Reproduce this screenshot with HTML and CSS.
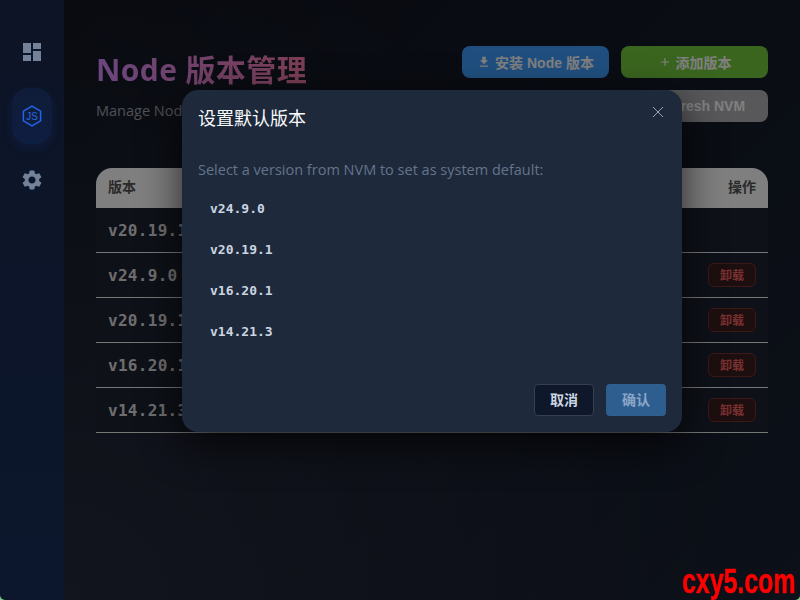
FILE: index.html
```html
<!DOCTYPE html>
<html lang="zh-CN">
<head>
<meta charset="utf-8">
<title>Node 版本管理</title>
<link rel="stylesheet" href="styles.css">
</head>
<body>
<div class="app">
  <nav class="sidebar">
    <a class="nav-item"><svg class="nav-icon" viewBox="0 0 24 24"><path d="M3 13h8V3H3v10zm0 8h8v-6H3v6zm10 0h8V11h-8v10zm0-18v6h8V3h-8z"/></svg></a>
    <a class="nav-item active"><svg class="nav-icon" viewBox="0 0 24 24"><path class="hex" d="M12 2.2l8.6 4.9v9.8L12 21.8l-8.6-4.9V7.1z"/><text class="js" x="12" y="16" textLength="11.5" lengthAdjust="spacingAndGlyphs">JS</text></svg></a>
    <a class="nav-item"><svg class="nav-icon" viewBox="0 0 24 24"><path d="M19.14 12.94c.04-.3.06-.61.06-.94 0-.32-.02-.64-.07-.94l2.03-1.58c.18-.14.23-.41.12-.61l-1.92-3.32c-.12-.22-.37-.29-.59-.22l-2.39.96c-.5-.38-1.03-.7-1.62-.94l-.36-2.54c-.04-.24-.24-.41-.48-.41h-3.84c-.24 0-.43.17-.47.41l-.36 2.54c-.59.24-1.13.57-1.62.94l-2.39-.96c-.22-.08-.47 0-.59.22L2.74 8.87c-.12.21-.08.47.12.61l2.03 1.58c-.05.3-.09.63-.09.94s.02.64.07.94l-2.03 1.58c-.18.14-.23.41-.12.61l1.92 3.32c.12.22.37.29.59.22l2.39-.96c.5.38 1.03.7 1.62.94l.36 2.54c.05.24.24.41.48.41h3.84c.24 0 .44-.17.47-.41l.36-2.54c.59-.24 1.13-.56 1.62-.94l2.39.96c.22.08.47 0 .59-.22l1.92-3.32c.12-.22.07-.47-.12-.61l-2.01-1.58zM12 15.6c-1.98 0-3.6-1.62-3.6-3.6s1.62-3.6 3.6-3.6 3.6 1.62 3.6 3.6-1.62 3.6-3.6 3.6z"/></svg></a>
  </nav>
  <main class="main">
    <header class="page-header">
      <div class="heading">
        <h1 class="title">Node 版本管理</h1>
        <p class="subtitle">Manage Node.js versions</p>
      </div>
      <div class="actions">
        <button class="btn btn-blue"><svg class="btn-icon" viewBox="0 0 24 24"><path d="M19 9h-4V3H9v6H5l7 7 7-7zM5 18v2h14v-2H5z"/></svg>安装 Node 版本</button>
        <button class="btn btn-green"><svg class="btn-icon" viewBox="0 0 24 24"><path d="M19 13h-6v6h-2v-6H5v-2h6V5h2v6h6v2z"/></svg>添加版本</button>
        <button class="btn btn-grey btn-refresh"><svg class="btn-icon" viewBox="0 0 24 24"><path d="M17.65 6.35A7.96 7.96 0 0 0 12 4a8 8 0 1 0 7.73 10h-2.08A6 6 0 1 1 12 6c1.66 0 3.14.69 4.22 1.78L13 11h7V4l-2.35 2.35z"/></svg>Refresh NVM</button>
      </div>
    </header>
    <table class="versions">
      <thead><tr><th>版本</th><th class="op">操作</th></tr></thead>
      <tbody>
        <tr><td class="ver">v20.19.1</td><td class="op"></td></tr>
        <tr><td class="ver">v24.9.0</td><td class="op"><button class="uninstall">卸载</button></td></tr>
        <tr><td class="ver">v20.19.1</td><td class="op"><button class="uninstall">卸载</button></td></tr>
        <tr><td class="ver">v16.20.1</td><td class="op"><button class="uninstall">卸载</button></td></tr>
        <tr><td class="ver">v14.21.3</td><td class="op"><button class="uninstall">卸载</button></td></tr>
      </tbody>
    </table>
    <div class="overlay">
      <section class="dialog">
        <header class="dialog-header">
          <h2 class="dialog-title">设置默认版本</h2>
          <svg class="close" viewBox="0 0 12 12"><path d="M1 1l10 10M11 1L1 11"/></svg>
        </header>
        <div class="dialog-body">
          <p class="message">Select a version from NVM to set as system default:</p>
          <ul class="options">
            <li>v24.9.0</li>
            <li>v20.19.1</li>
            <li>v16.20.1</li>
            <li>v14.21.3</li>
          </ul>
        </div>
        <footer class="dialog-footer">
          <button class="dlg-btn cancel">取消</button>
          <button class="dlg-btn confirm">确认</button>
        </footer>
      </section>
    </div>
  </main>
</div>
<div class="watermark">cxy5.com</div>
</body>
</html>
```
FILE: styles.css
```css
* { box-sizing: border-box; }
html, body { margin: 0; height: 100%; overflow: hidden; }
body {
  font-family: "Open Sans", "Noto Sans CJK SC", sans-serif;
  background: #7fcf8c;
  color: #fff;
}
.app {
  display: flex;
  height: 600px;
  overflow: hidden;
  border-radius: 0 0 5px 5px;
}
.sidebar {
  width: 64px;
  flex: none;
  padding: 24px 12px 0;
  display: flex;
  flex-direction: column;
  gap: 8px;
  background: linear-gradient(180deg, #0d1426 0%, #0c172d 100%);
}
.nav-item {
  height: 56px;
  display: flex;
  align-items: center;
  justify-content: center;
  border-radius: 16px;
}
.nav-item.active {
  background: linear-gradient(180deg, #0f1c38, #0e1e42);
  box-shadow: 0 4px 12px rgba(37, 99, 235, 0.1);
}
.nav-icon { width: 24px; height: 24px; fill: #738298; }
.active .nav-icon { fill: none; }
.hex { fill: none; stroke: #2563eb; stroke-width: 1.5; }
.js {
  fill: #2a6be8;
  font: 400 11px "Liberation Sans", sans-serif;
  text-anchor: middle;
}
.main {
  position: relative;
  flex: 1;
  min-width: 0;
  padding: 46px 32px 0;
  background:
    radial-gradient(circle at 0% 100%, #262a3c 0%, rgba(38, 42, 60, 0) 70%),
    linear-gradient(135deg, #10141f 0%, #182030 100%);
}
.page-header { display: flex; justify-content: space-between; }
.title {
  margin: 0;
  font: 700 30px/48px "Open Sans", "Noto Sans CJK SC", sans-serif;
  letter-spacing: 0.4px;
  background: linear-gradient(90deg, #d68cff, #f87ca8);
  -webkit-background-clip: text;
  background-clip: text;
  color: transparent;
}
.subtitle { margin: 7px 0 0; font-size: 14.5px; line-height: 20px; color: #a0a0a8; }
.actions { display: grid; grid-template-columns: 147px 147px; gap: 12px; }
.btn {
  height: 32px;
  display: flex;
  align-items: center;
  justify-content: center;
  gap: 4px;
  border: 0;
  border-radius: 8px;
  color: #fff;
  font: 700 14px "Liberation Sans", "Noto Sans CJK SC", sans-serif;
}
.btn-icon { width: 14px; height: 14px; fill: currentColor; }
.btn-blue { background: #409eff; }
.btn-green { background: #74ca3e; }
.btn-grey { background: #b0b0b6; }
.btn-refresh { grid-column: 2; padding-right: 10px; }
.versions {
  width: 100%;
  margin-top: 46px;
  border-collapse: separate;
  border-spacing: 0;
}
.versions th {
  height: 40px;
  padding: 0 12px 4px;
  background: #fff;
  color: #555;
  font-size: 14px;
  font-weight: 700;
  text-align: left;
}
.versions th:first-child { border-top-left-radius: 16px; }
.versions th:last-child { border-top-right-radius: 16px; }
.versions .op { text-align: right; }
.versions td {
  height: 45px;
  padding: 0 12px;
  background: #1c2230;
  border-bottom: 1px solid #eee;
}
.ver {
  font: 700 16px "DejaVu Sans Mono", monospace;
  letter-spacing: 0.3px;
  color: #dcdcdc;
}
.uninstall {
  width: 48px;
  height: 24px;
  display: inline-block;
  vertical-align: middle;
  padding: 0 0 2px;
  border: 1px solid #7c2f2f;
  border-radius: 6px;
  background: #3a1e1e;
  color: #f06060;
  font: 700 12px "Noto Sans CJK SC", sans-serif;
}
.overlay {
  position: absolute;
  inset: 0;
  display: flex;
  justify-content: center;
  align-items: flex-start;
  padding-top: 90px;
  background: rgba(0, 0, 0, 0.5);
}
.dialog {
  width: 500px;
  height: 342px;
  display: flex;
  flex-direction: column;
  border-radius: 16px;
  background: #1e293b;
  box-shadow: 0 12px 40px rgba(0, 0, 0, 0.7);
}
.dialog-header {
  height: 56px;
  padding: 0 16px;
  display: flex;
  align-items: center;
  justify-content: space-between;
}
.dialog-title {
  margin: -3px 0 0;
  font: 400 18px "Noto Sans CJK SC", sans-serif;
  color: #f8fafc;
}
.close { width: 12px; height: 12px; margin-right: 2px; margin-top: -12px; fill: none; stroke: #94a3b8; stroke-width: 1; }
.dialog-body { flex: 1; padding: 12px 16px 0; }
.message { margin: 0; font-size: 14.5px; line-height: 24px; color: #64748b; }
.options { margin: 6px 0 0; padding: 0; list-style: none; }
.options li {
  height: 41px;
  padding-left: 12px;
  font: 700 13px/41px "DejaVu Sans Mono", monospace;
  color: #cbd5e1;
}
.dialog-footer { padding: 0 16px 16px; display: flex; justify-content: flex-end; gap: 12px; }
.dlg-btn {
  width: 60px;
  height: 32px;
  padding: 0 0 3px;
  border-radius: 4px;
  font: 700 14px "Noto Sans CJK SC", sans-serif;
}
.cancel { background: #0f172a; border: 1px solid #334155; color: #cbd5e1; }
.confirm { background: #2e5e90; border: 0; color: #8ba6c6; }
.watermark {
  position: fixed;
  right: 4px;
  bottom: 0;
  font: 700 35px/38px "Liberation Sans", sans-serif;
  color: #f00;
  transform: scaleX(0.71);
  transform-origin: right center;
  -webkit-text-stroke: 0.6px #f00;
}
```
